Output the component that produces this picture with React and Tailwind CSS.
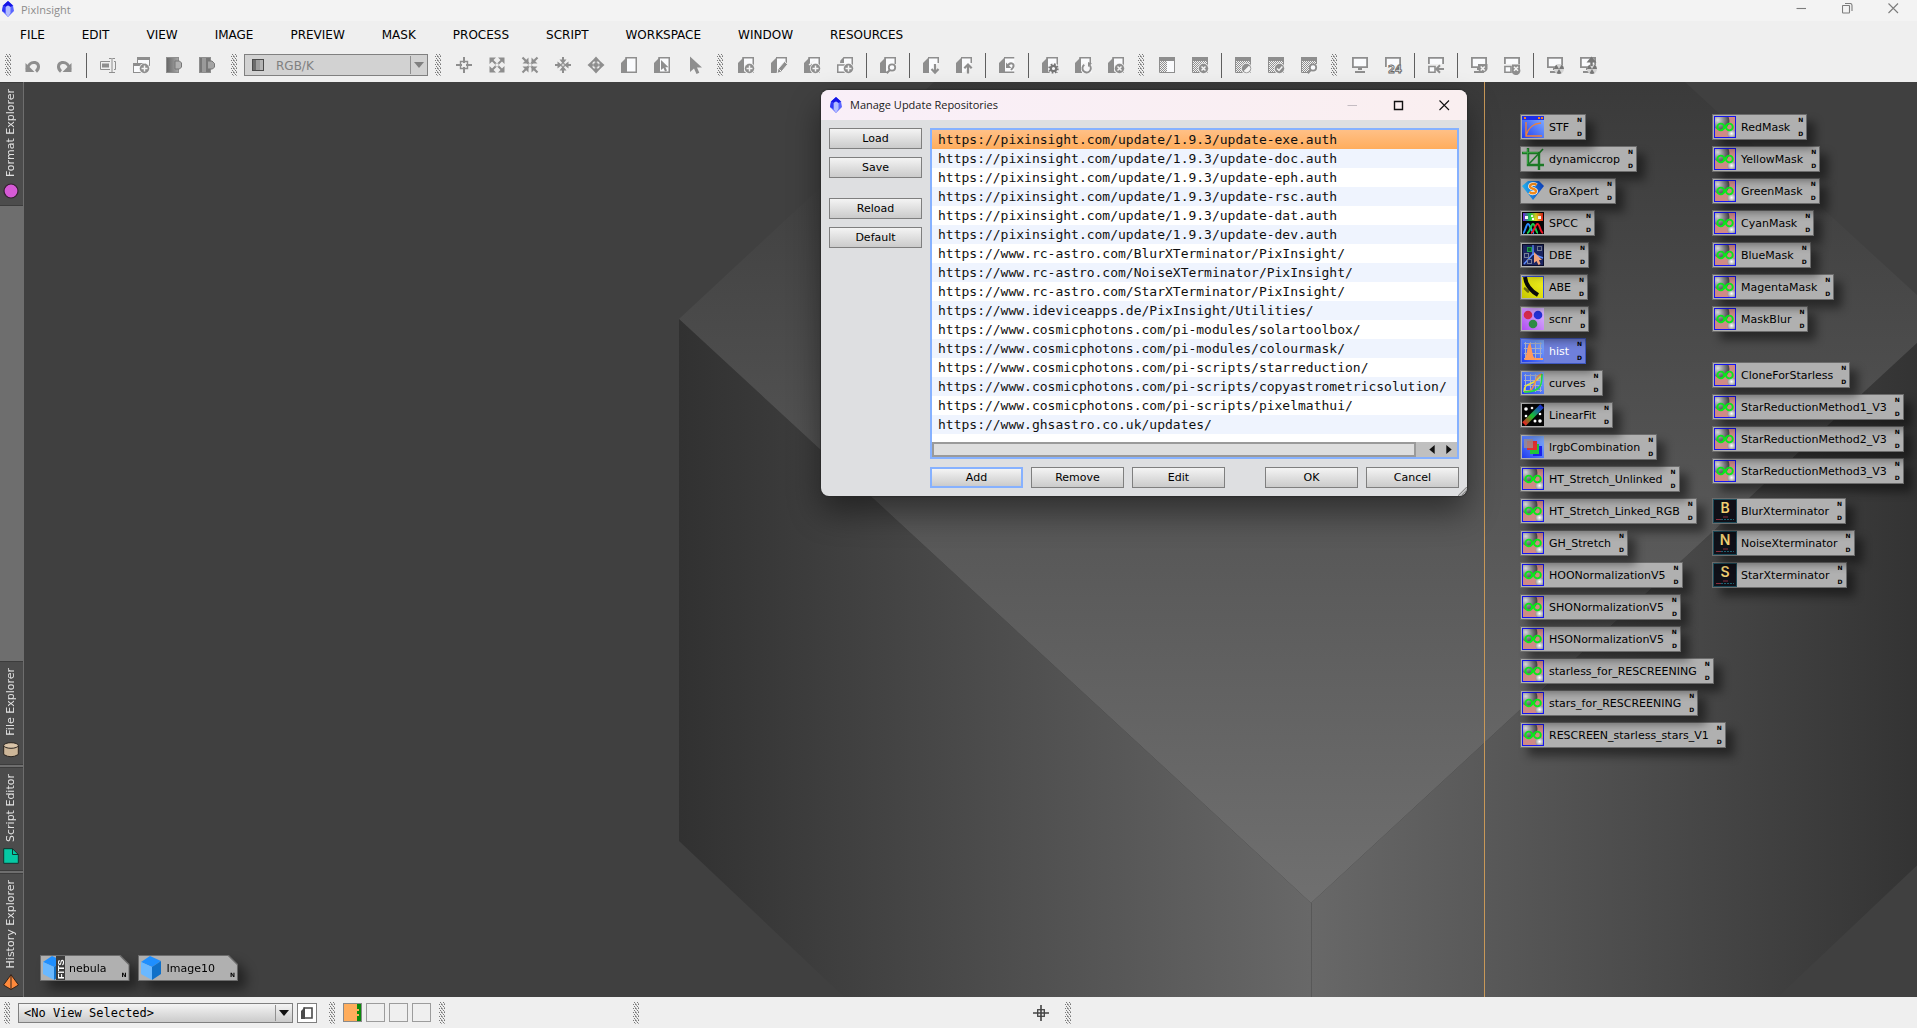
import React from "react";

/* ---------- toolbar glyphs, all on a 20x20 grid ---------- */
const G = "#8e8e8e";

const Doc = ({ flat }) =>
  flat ? (
    <g>
      <path d="M6 8 V6 L9 2.75 H17.25 V11" fill="#fafbfd" stroke={G} strokeWidth="1.5" />
      <path d="M5 8 L9 2 V8Z" fill={G} />
      <path d="M2.75 17.25 V10 H13 V17.25Z" fill="#fafbfd" stroke={G} strokeWidth="1.5" />
    </g>
  ) : (
    <g>
      <path d="M7 2.75 H17.25 V17.25 H7Z" fill="#fafbfd" stroke={G} strokeWidth="1.5" />
      <path d="M2 8 L8 2 V18 H2Z" fill={G} />
    </g>
  );
const OpenDoc = ({ cut }) => (
  <g>
    <path d={cut ? "M8 2.75 H17.25 V8 L11 17 H8Z" : "M8 2.75 H17.25 V7 L9 17 H8Z"} fill="#fafbfd" />
    <path d="M7 2.75 H17.25 V8" fill="none" stroke={G} strokeWidth="1.5" />
    <path d="M2 8 L8 2 V18 H2Z" fill={G} />
  </g>
);
const Win = ({ half }) => (
  <g>
    <rect x="2" y="2" width="16" height="16" fill="url(#dither)" />
    {half && <rect x="10" y="6" width="7" height="11" fill="#fafbfd" />}
    <path d="M2.5 2.5 H17.5 V17.5 H2.5Z" fill="none" stroke={G} />
    <rect x="2" y="2" width="16" height="4" fill={G} />
  </g>
);
const Badge = ({ children }) => (
  <g>
    <circle cx="13.5" cy="13.5" r="5.5" fill="#efefef" />
    <circle cx="13.5" cy="13.5" r="4.7" fill={G} />
    <g stroke="#f4f4f4" strokeWidth="1.5" fill="none">{children}</g>
  </g>
);
const PlusBadge = () => <Badge><path d="M13.5 10.5 V16.5 M10.5 13.5 H16.5" /></Badge>;
const XBadge = () => <Badge><path d="M11.5 11.5 L15.5 15.5 M15.5 11.5 L11.5 15.5" /></Badge>;
const Lens = () => (
  <g>
    <path d="M9 19 L13 9 L18.5 9 V18Z" fill="#f2f2f2" />
    <circle cx="14" cy="12.5" r="3.2" fill="#fafbfd" stroke={G} strokeWidth="1.8" />
    <path d="M11.8 15 L8.8 18.2" stroke={G} strokeWidth="2" />
  </g>
);
const Monitor = () => (
  <g>
    <path d="M2.9 2.9 H17.1 V12.1 H2.9Z" fill="#fafbfd" stroke={G} strokeWidth="1.8" />
    <path d="M8 13 H12 V15 H8Z M5 16 H15 V18 H5Z" fill={G} />
  </g>
);
const Atom = () => (
  <g>
    <circle cx="14" cy="14" r="5" fill="#d4d4d4" />
    <path d="M14 14 L11.5 9.7 A5 5 0 0 0 9 14Z M14 14 L16.5 9.7 A5 5 0 0 1 19 14Z M14 14 L11.5 18.3 A5 5 0 0 0 16.5 18.3Z" fill="#777" />
  </g>
);

const glyphs = {
  undo: <g><path d="M5 14.5 C6 10 9 6.8 13 7.5 C17.5 8.5 17.5 13.5 14 16.5" fill="none" stroke={G} strokeWidth="3" /><path d="M3.5 8 V17 H12.5Z" fill={G} /></g>,
  redo: <g transform="translate(20 0) scale(-1 1)"><path d="M5 14.5 C6 10 9 6.8 13 7.5 C17.5 8.5 17.5 13.5 14 16.5" fill="none" stroke={G} strokeWidth="3" /><path d="M3.5 8 V17 H12.5Z" fill={G} /></g>,
  rename: <g fill="none" stroke={G}><path d="M12 6.5 H2.5 V14.5 H12 M16 6.5 H17.5 V14.5 H16" /><path d="M11 3.5 H13.5 L14 4 L14.5 3.5 H17 M14 4 V17 M11 17.5 H17" /><rect x="4.5" y="9" width="6" height="3" fill={G} /></g>,
  newwin: <g><rect x="6.5" y="2.5" width="12" height="8" fill="#fafbfd" stroke={G} /><rect x="6" y="2" width="13" height="3" fill={G} /><rect x="2.5" y="8.5" width="12" height="9" fill="#fafbfd" stroke={G} /><rect x="2" y="8" width="13" height="3" fill={G} /><PlusBadge /></g>,
  dupA: <g><rect x="2.5" y="2.5" width="12" height="15" fill="url(#darkdoc)" stroke={G} /><path d="M11 6 H15.5 L17.5 8 V12 L15.5 14 H11Z" fill="#b0b0b0" stroke="#777" /></g>,
  dupB: <g><rect x="2.5" y="2.5" width="11" height="15" fill="#777" stroke={G} /><rect x="5" y="3" width="4" height="14" fill="#9a9a9a" /><path d="M10.5 6 H15 L17.5 8.5 V12 L15.5 14 H10.5Z" fill="#a4a4a4" stroke="#777" /></g>,
  cross: <g fill="none" stroke={G} strokeWidth="2"><path d="M10 2 V8 M10 12 V18 M2 10 H8 M12 10 H18" /><path d="M6.5 6.5 H13.5 V13.5 H6.5Z" strokeWidth="1.4" /></g>,
  fitout: <g fill={G}><path d="M2.5 2.5 H9 L2.5 9Z M17.5 2.5 V9 L11 2.5Z M2.5 17.5 V11 L9 17.5Z M17.5 17.5 H11 L17.5 11Z" /><path d="M4 4 L16 16 M16 4 L4 16" stroke={G} strokeWidth="2" /><rect x="8.5" y="8.5" width="3" height="3" fill="#efefef" /></g>,
  fitin: <g fill={G}><path d="M8.5 8.5 H2.5 L8.5 2.5Z M11.5 8.5 V2.5 L17.5 8.5Z M8.5 11.5 V17.5 L2.5 11.5Z M11.5 11.5 H17.5 L11.5 17.5Z" /><path d="M2.5 2.5 L17.5 17.5 M17.5 2.5 L2.5 17.5" stroke={G} strokeWidth="2.2" /><rect x="8.5" y="8.5" width="3" height="3" fill="#efefef" /></g>,
  zoomin: <g fill={G}><path d="M10 9 L6.5 4.5 H9 V2 H11 V4.5 H13.5Z M10 11 L6.5 15.5 H9 V18 H11 V15.5 H13.5Z M9 10 L4.5 6.5 V9 H2 V11 H4.5 V13.5Z M11 10 L15.5 6.5 V9 H18 V11 H15.5 V13.5Z" /><rect x="8.7" y="8.7" width="2.6" height="2.6" fill="#efefef" stroke={G} /></g>,
  zoomout: <g fill={G}><path d="M10 1.5 L14.5 6.5 H5.5Z M10 18.5 L14.5 13.5 H5.5Z M1.5 10 L6.5 5.5 V14.5Z M18.5 10 L13.5 5.5 V14.5Z" /><path d="M6 6 L14 14 M14 6 L6 14 M10 5 V15 M5 10 H15" stroke={G} strokeWidth="1.6" /><path d="M7 7 h1.6 v1.6 h-1.6z M11.4 7 h1.6 v1.6 h-1.6z M7 11.4 h1.6 v1.6 h-1.6z M11.4 11.4 h1.6 v1.6 h-1.6z" fill="#efefef" /></g>,
  doc: <Doc />,
  docarrow: <g><Doc /><path d="M9 5 V15 L11.5 13 L13 16.5 L15 15.5 L13.4 12.2 H16.5Z" fill={G} /></g>,
  pointer: <path d="M5 1.5 V17 L9 13.5 L11.5 19 L14.3 17.8 L12 12.5 H17Z" fill={G} />,
  docplus: <g><Doc /><PlusBadge /></g>,
  docpen: <g><OpenDoc /><path d="M8 18.5 L9 14 L15.5 6.5 L18.7 9.3 L12.3 17Z" fill={G} stroke="#f4f4f4" /><path d="M10.5 14.5 L12 16" stroke="#f4f4f4" /></g>,
  docadd2: <g><Doc /><path d="M2 18 L10 8 V18Z" fill={G} /><path d="M7 10 L13 5" stroke="#f4f4f4" strokeWidth="1.4" /><PlusBadge /></g>,
  docadd3: <g><Doc flat /><PlusBadge /></g>,
  doclens: <g><Doc /><Lens /></g>,
  docdown: <g><OpenDoc cut /><path d="M14 9 V18 M10.5 14 L14 17.7 L17.5 14" fill="none" stroke={G} strokeWidth="2.2" /></g>,
  docup: <g><OpenDoc cut /><path d="M14 18.5 V10 M10.3 13.3 L14 9.5 L17.7 13.3" fill="none" stroke={G} strokeWidth="2.2" /></g>,
  docundo: <g><path d="M8 2.75 H17.25 V17.25 H8Z" fill="#fafbfd" /><path d="M7 2.75 H17.25 M7 17.25 H17.25" stroke={G} strokeWidth="1.5" /><path d="M2 8 L8 2 V18 H2Z" fill={G} /><path d="M10.5 11.5 C12.5 6.5 18.5 8 16 12.5 L14 15" fill="none" stroke={G} strokeWidth="2" /><path d="M9 7.5 V13 H14.5Z" fill={G} /></g>,
  docgear: <g><Doc /><circle cx="13.5" cy="13.5" r="5.5" fill="#f4f4f6" /><circle cx="13.5" cy="13.5" r="4.2" fill="none" stroke="#777" strokeWidth="2" strokeDasharray="1.65 1.65" /><circle cx="13.5" cy="13.5" r="2.7" fill="none" stroke="#777" strokeWidth="2.2" /></g>,
  docloop: <g><Doc /><rect x="9" y="8" width="10" height="10" fill="#f6f6f8" /><path d="M11.3 9.8 A4.2 4.2 0 1 0 16.5 10.2" fill="none" stroke={G} strokeWidth="1.9" /><path d="M15 7 V12 L19 8.5Z" fill={G} /></g>,
  docx: <g><Doc /><XBadge /></g>,
  win: <Win half />,
  winx: <g><Win /><XBadge /></g>,
  winhalf: <g><Win /><Badge><path d="M11 16 L16 11 A3.5 3.5 0 0 1 11 16Z" fill="#f4f4f4" strokeWidth="0.6" /></Badge></g>,
  wincheck: <g><Win /><Badge><path d="M11 13.5 L13 15.5 L16.3 11.5" /></Badge></g>,
  winlens: <g><Win /><Lens /></g>,
  mon: <Monitor />,
  mon24: <g><path d="M2.9 12 V2.9 H17.1 V10" fill="#fafbfd" stroke={G} strokeWidth="1.8" /><text x="5" y="18" fontFamily="DejaVu Sans" fontWeight="bold" fontSize="10" fill="#efefef" stroke="#6a6a6a" strokeWidth="0.9">24</text></g>,
  monleft: <g><path d="M2.9 9 V2.9 H17.1 V9" fill="#fafbfd" stroke={G} strokeWidth="1.8" /><path d="M2.9 11.5 H9 V17.2 H2.9Z" fill="#fafbfd" stroke={G} strokeWidth="1.6" /><path d="M18 14 H10.5 M14 10.3 L10.3 14 L14 17.7" fill="none" stroke={G} strokeWidth="2" /></g>,
  monx: <g><Monitor /><path d="M9 9 H18.5 V14 A5 5 0 0 1 9 14Z" fill={G} /><path d="M11.7 11.5 L15.7 15.5 M15.7 11.5 L11.7 15.5" stroke="#f4f4f4" strokeWidth="1.6" /></g>,
  monboxx: <g><path d="M2.9 9 V2.9 H17.1 V9" fill="#fafbfd" stroke={G} strokeWidth="1.8" /><path d="M2.9 11.5 H9 V17.2 H2.9Z" fill="#fafbfd" stroke={G} strokeWidth="1.6" /><path d="M10 9.5 H18 V14 A4 4 0 0 1 10 17.5Z" fill={G} /><path d="M12 11.7 L16 15.7 M16 11.7 L12 15.7" stroke="#f4f4f4" strokeWidth="1.5" /></g>,
  monatom: <g><Monitor /><Atom /></g>,
  monatomup: <g><Monitor /><Atom /><path d="M13.5 11 V5" stroke="#777" strokeWidth="2.4" /><path d="M8.5 7.5 L13.5 1.5 L18.5 7.5Z" fill="#777" /></g>,
};

const Glyph = ({ name }) => (
  <svg viewBox="0 0 20 20" className="size-5" aria-hidden="true">{glyphs[name]}</svg>
);

const Handle = ({ wide = "w-[18px]" }) => (
  <div className={"flex h-[22px] shrink-0 justify-center " + wide}>
    <svg className="h-[22px] w-[6px]" aria-hidden="true"><rect width="6" height="22" fill="url(#grip)" /></svg>
  </div>
);
const Sep = () => (
  <div className="flex h-[25px] w-[10px] shrink-0 justify-center"><div className="w-px bg-[#5f5f5f]" /></div>
);

const toolbarRest = [
  "cross", "fitout", "fitin", "zoomin", "zoomout", "doc", "docarrow", "pointer", "#",
  "docplus", "docpen", "docadd2", "docadd3", "|", "doclens", "|", "docdown", "docup", "|", "docundo", "|",
  "docgear", "docloop", "docx", "#", "win", "winx", "|", "winhalf", "wincheck", "winlens", "#",
  "mon", "mon24", "|", "monleft", "|", "monx", "monboxx", "|", "monatom", "monatomup",
];
const ToolItem = ({ name }) => {
  if (name === "|") return <Sep />;
  if (name === "#") return <Handle />;
  return (
    <button aria-label={name} className="flex h-8 w-[33px] shrink-0 items-center justify-center">
      <Glyph name={name} />
    </button>
  );
};

const Logo = ({ className }) => (
  <svg viewBox="0 0 12 16" className={className} aria-hidden="true">
    <path d="M6 0 L11 4.5 L12 10 L6 16 L0 10 L1 4.5Z" fill="#5a66ff" />
    <path d="M6 0 L11 4.5 L8.5 6 L6 4.5 L3.5 6 L1 4.5Z" fill="#1414e6" />
    <path d="M3.5 6 L6 4.5 L8.5 6 L8.5 12 L6 16 L3.5 12Z" fill="#b3bdff" />
    <path d="M1 4.5 L3.5 6 V12 L0 10Z" fill="#3038f5" />
  </svg>
);

/* ---------- workspace icons on a 22x22 grid ---------- */
const art = {
  script: (
    <g>
      <rect width="22" height="22" fill="#cf8a86" />
      <circle cx="6.500" cy="5" r="9" fill="url(#ball)" />
      <circle cx="18" cy="18" r="4.500" fill="url(#smallball)" />
      <circle cx="6.800" cy="11" r="3.400" fill="none" stroke="#0be81c" strokeWidth="1.900" />
      <circle cx="15.400" cy="11" r="3.400" fill="none" stroke="#0be81c" strokeWidth="1.900" />
      <path d="M9 13 L13 9" stroke="#0be81c" strokeWidth="1.900" />
      <rect x="0.5" y="0.5" width="21" height="21" fill="none" stroke="#1414f0" />
    </g>
  ),
  stf: <g><rect width="22" height="22" fill="url(#blue)" /><rect width="22" height="4" fill="#1d2ee8" /><path d="M2 1 h2 v2 h-2z M16 1 h2 v2 h-2z M19 1 h2 v2 h-2z" fill="#f58025" /><path d="M4 6 V20 H20 M4 20 C6 12 10 8 19 7" fill="none" stroke="#f08038" strokeWidth="1.4" /></g>,
  crop: <g fill="none" strokeWidth="2.4" stroke="#1c7a26"><path d="M0 5 H17 V22 M6 0 V17 H22" /><path d="M6 17 L21 1" strokeWidth="1.6" /><path d="M1 4.5 H16 M5.500 1 V16" stroke="#3fae48" strokeWidth="0.8" /></g>,
  graxpert: <g><path d="M0 6 L6 1 H17 L22 6 L11 20Z" fill="url(#gem)" /><path d="M14.500 5 C12 3 8 4 8 6.500 C8 9 14 8.500 14 11 C14 13.500 10 14 7.500 12" fill="none" stroke="#fff" strokeWidth="3.800" /><path d="M14.500 5 C12 3 8 4 8 6.500 C8 9 14 8.500 14 11 C14 13.500 10 14 7.500 12" fill="none" stroke="#f08a1c" strokeWidth="2.400" /></g>,
  spcc: <g><rect width="22" height="22" fill="#050505" /><rect x="1" y="1" width="20" height="8" fill="url(#rainbow)" /><path d="M3 4 h3 v3 h-3z M9 3 h2 v2 h-2z M10 6 h2 v2 h-2z M16 4 h3 v3 h-3z" fill="#fff" /><path d="M1 21 C3 21 4 12 6 12 C8 12 10 21 12 21" fill="none" stroke="#2c8cff" strokeWidth="2" /><path d="M5 21 C8 21 9 12 11 12 C13 12 14 21 16 21" fill="none" stroke="#18d050" strokeWidth="2" /><path d="M9 21 C12 21 13 12 15.500 12 C18 12 18 20 21 21" fill="none" stroke="#f01828" strokeWidth="2" /></g>,
  dbe: <g><rect width="22" height="22" fill="#0b0d2a" /><rect x="1" y="1" width="20" height="20" fill="#1c2560" /><path d="M11 1 V10 L2 20 M11 10 L21 14" stroke="#5d8dff" strokeWidth="1.5" fill="none" /><g fill="none" stroke="#777f98"><rect x="15.500" y="2.500" width="4" height="4" /><rect x="2.500" y="9.500" width="4" height="4" /><rect x="5.500" y="15.500" width="4" height="4" /></g><rect x="5.500" y="3.500" width="4" height="4" fill="#0f6030" stroke="#1fa050" /><path d="M12 8 V19 L14.500 17 L16.500 21 L18.500 20 L17 16 H20Z" fill="#f2a47c" /></g>,
  abe: <g><rect width="22" height="22" fill="#3450d8" /><rect y="1" width="21" height="21" fill="url(#yel)" /><path d="M3 1 C4 10 9 15 16 19" stroke="#0a0a0a" strokeWidth="4" fill="none" /><path d="M2 12 C4 13 5 15 7 16" stroke="#6b6b10" strokeWidth="2.5" fill="none" /></g>,
  scnr: <g><rect width="22" height="22" fill="url(#pur)" /><circle cx="6" cy="7" r="4.300" fill="#d62b4c" /><circle cx="16" cy="7" r="4.300" fill="#2432d8" /><circle cx="11" cy="16" r="4.300" fill="#2f8a45" /></g>,
  hist: <g><rect width="22" height="22" fill="url(#blue)" /><path d="M2 3.500 H20 M2 8.500 H20 M2 13.500 H20 M2 18.500 H20 M3.500 2 V20 M8.500 2 V20 M13.500 2 V20 M18.500 2 V20" stroke="#a9b0c8" fill="none" /><path d="M2 20 C5 18 5 4 8 3 C10 6 10 17 13 18 H21 V20Z" fill="#ff9a5c" /></g>,
  curves: <g><rect width="22" height="22" fill="url(#blue)" /><path d="M2 3.500 H20 M2 8.500 H20 M2 13.500 H20 M2 18.500 H20 M3.500 2 V20 M8.500 2 V20 M13.500 2 V20 M18.500 2 V20" stroke="#a9b0c8" fill="none" /><path d="M2 20 C2 8 12 16 20 2" stroke="#e8e83a" strokeWidth="1.500" fill="none" /><path d="M2 20 C16 20 10 4 20 2" stroke="#f0904a" strokeWidth="1.500" fill="none" /><path d="M2 20 C20 20 20 12 20 2" stroke="#20e040" strokeWidth="1.500" fill="none" /></g>,
  linear: <g><rect width="22" height="22" fill="#050505" /><g fill="#fff"><circle cx="4" cy="5" r="1.800" /><circle cx="10" cy="4" r="1.300" /><circle cx="4" cy="12" r="1.300" /><circle cx="18" cy="10" r="1.300" /><circle cx="13" cy="17" r="1.500" /><circle cx="18" cy="17" r="1.800" /></g><path d="M2 20 L20 2" stroke="url(#rainbow2)" strokeWidth="5" /></g>,
  lrgb: <g><rect width="22" height="22" fill="url(#blue)" /><rect x="11" y="10" width="9" height="10" fill="#1b22e8" /><rect x="8" y="8" width="9" height="10" fill="#21c43a" /><rect x="5" y="5" width="10" height="9" fill="#e03030" /><rect x="2" y="3" width="9" height="9" fill="#a08e8e" opacity="0.8" /></g>,
};

const Xterm = ({ letter }) => (
  <span className="flex h-6 w-6 flex-col items-center border border-[#1c4a58] bg-[#0f1018] font-['Inter'] text-sm leading-4 font-semibold text-[#f0cf72]">
    {letter}
    <svg viewBox="0 0 20 5" className="h-[5px] w-5" aria-hidden="true"><path d="M8 1 H13" stroke="#8a2c3c" /><path d="M1 3.500 H6" stroke="#8a2c3c" /><path d="M6 3.500 H19" stroke="#1e6070" strokeDasharray="2 1" /></svg>
  </span>
);

const ProcessIcon = ({ label, icon = "script", selected, z }) => (
  <button
    style={{ zIndex: z }}
    className={
      "relative flex h-[26px] items-center border pr-4 text-[11px] shadow-[8px_8px_10px_rgba(0,0,0,0.45)] " +
      (selected ? "border-[#4058c0] bg-[#6f80dc] text-white" : "border-[#6c6c6c] bg-[#b0b0b0] text-black")
    }
  >
    {icon.length === 1 ? (
      <Xterm letter={icon} />
    ) : (
      <svg viewBox="0 0 22 22" className="mx-px size-[22px]" aria-hidden="true">{art[icon]}</svg>
    )}
    <span className="ml-1 pt-0.5 whitespace-nowrap">{label}</span>
    <span className="absolute top-[2px] right-[3px] flex h-5 flex-col justify-between text-[6px] leading-[6px] font-bold text-black">
      <span>N</span>
      <span>D</span>
    </span>
  </button>
);

const columnA = [
  ["STF", "stf"], ["dynamiccrop", "crop"], ["GraXpert", "graxpert"], ["SPCC", "spcc"], ["DBE", "dbe"], ["ABE", "abe"],
  ["scnr", "scnr"], ["hist", "hist"], ["curves", "curves"], ["LinearFit", "linear"], ["lrgbCombination", "lrgb"],
  ["HT_Stretch_Unlinked"], ["HT_Stretch_Linked_RGB"], ["GH_Stretch"], ["HOONormalizationV5"], ["SHONormalizationV5"],
  ["HSONormalizationV5"], ["starless_for_RESCREENING"], ["stars_for_RESCREENING"], ["RESCREEN_starless_stars_V1"],
];
const columnB = [
  [["RedMask"], ["YellowMask"], ["GreenMask"], ["CyanMask"], ["BlueMask"], ["MagentaMask"], ["MaskBlur"]],
  [["CloneForStarless"], ["StarReductionMethod1_V3"], ["StarReductionMethod2_V3"], ["StarReductionMethod3_V3"]],
  [["BlurXterminator", "B"], ["NoiseXterminator", "N"], ["StarXterminator", "S"]],
];
const Stack = ({ items }) => (
  <div className="flex flex-col items-start gap-1.5">
    {items.map(([label, icon], i) => (
      <ProcessIcon key={label} label={label} icon={icon} selected={label === "hist"} z={items.length - i} />
    ))}
  </div>
);

const ImageIcon = ({ label, fits }) => (
  <div className="drop-shadow-[8px_8px_6px_rgba(0,0,0,0.45)]">
    <button className="relative flex h-[26px] items-center bg-[#6c6c6c] p-px text-[11px] text-black [clip-path:polygon(0_0,calc(100%_-_9px)_0,100%_9px,100%_100%,0_100%)]">
      <span className="flex h-6 items-center bg-[#b0b0b0] pr-[22px] [clip-path:polygon(0_0,calc(100%_-_9px)_0,100%_9px,100%_100%,0_100%)]">
        <svg viewBox="0 0 24 24" className="size-6" aria-hidden="true">
          <path d="M2 6 L11 0 L22 5 L13 11Z" fill="#1f8fff" />
          <path d="M2 6 L13 11 V24 L2 18Z" fill="#6ab8ff" />
          <path d="M22 5 V18 L13 24 V11Z" fill="#1070c8" />
          {fits && <rect x="15" width="9" height="24" fill="#3c3c3c" />}
          {fits && <text transform="translate(23 23) rotate(-90)" fontFamily="Liberation Sans" fontWeight="bold" fontSize="9" fill="#fff">FITS</text>}
        </svg>
        <span className="ml-1 pt-0.5">{label}</span>
      </span>
      <span className="absolute right-[3px] bottom-[3px] text-[6px] leading-[6px] font-bold">N</span>
    </button>
  </div>
);

/* ---------- sidebar ---------- */
const SideTab = ({ label, children }) => (
  <button className="mr-px flex w-[23px] flex-col items-center gap-[6px] border-y border-[#3c3c3c] bg-[#4c4c4c] pt-[6px] pr-[2px] pb-[6px] text-[11px] leading-4 text-[#e2e2e2]">
    <span className="rotate-180 whitespace-nowrap [writing-mode:vertical-rl]">{label}</span>
    <svg viewBox="0 0 16 16" className="size-4" aria-hidden="true">{children}</svg>
  </button>
);

/* ---------- dialog ---------- */
const urls = [
  "https://pixinsight.com/update/1.9.3/update-exe.auth",
  "https://pixinsight.com/update/1.9.3/update-doc.auth",
  "https://pixinsight.com/update/1.9.3/update-eph.auth",
  "https://pixinsight.com/update/1.9.3/update-rsc.auth",
  "https://pixinsight.com/update/1.9.3/update-dat.auth",
  "https://pixinsight.com/update/1.9.3/update-dev.auth",
  "https://www.rc-astro.com/BlurXTerminator/PixInsight/",
  "https://www.rc-astro.com/NoiseXTerminator/PixInsight/",
  "https://www.rc-astro.com/StarXTerminator/PixInsight/",
  "https://www.ideviceapps.de/PixInsight/Utilities/",
  "https://www.cosmicphotons.com/pi-modules/solartoolbox/",
  "https://www.cosmicphotons.com/pi-modules/colourmask/",
  "https://www.cosmicphotons.com/pi-scripts/starreduction/",
  "https://www.cosmicphotons.com/pi-scripts/copyastrometricsolution/",
  "https://www.cosmicphotons.com/pi-scripts/pixelmathui/",
  "https://www.ghsastro.co.uk/updates/",
];
const Btn = ({ children, focus }) => (
  <button
    className={
      "flex h-[21px] w-[93px] items-center justify-center bg-linear-to-b from-[#f4f4f4] to-[#cbcbcb] pt-0.5 text-[11px] text-black " +
      (focus ? "border-2 border-[#86b1ff]" : "border border-[#7f7f7f]")
    }
  >
    {children}
  </button>
);

const Dialog = () => (
  <section
    role="dialog"
    aria-label="Manage Update Repositories"
    className="absolute top-[8px] left-[797px] z-40 flex w-[646px] flex-col overflow-hidden rounded-lg bg-[#dedfe1] shadow-[0_0_1px_1px_rgba(40,40,40,0.6),0_16px_32px_rgba(0,0,0,0.45)]"
  >
    <header className="flex h-[30px] items-center bg-linear-to-r from-[#f9eff8] to-[#faeff0] pl-[9px]">
      <Logo className="h-4 w-3" />
      <h2 className="ml-2 flex-1 font-['Open_Sans'] text-[11px] text-[#1a1a1a]">Manage Update Repositories</h2>
      <WinButton kind="min" color="#c4bcc2" />
      <WinButton kind="max" color="#111" />
      <WinButton kind="close" color="#111" />
    </header>
    <div className="flex gap-2 px-2 pt-2 pb-[8px]">
      <div className="flex flex-col gap-2">
        <Btn>Load</Btn>
        <Btn>Save</Btn>
        <div className="h-1" />
        <Btn>Reload</Btn>
        <Btn>Default</Btn>
      </div>
      <div className="flex min-w-0 flex-1 flex-col gap-2">
        <div className="border-2 border-[#86b1ff] bg-white">
          <ul className="overflow-hidden pb-2 font-['DejaVu_Sans_Mono'] text-[13px] leading-[19px] text-[#101010]">
            {urls.map((u, i) => (
              <li
                key={u}
                className={
                  "h-[19px] pl-[6px] whitespace-nowrap " +
                  (i === 0 ? "bg-linear-to-b from-[#ffc086] to-[#ffad5c]" : i % 2 ? "bg-[#eff4fe]" : "bg-white")
                }
              >
                {u}
              </li>
            ))}
          </ul>
          <div className="flex h-[15px] items-stretch bg-[#c0c0c0]">
            <div className="flex-1 border-2 border-[#9a9a9a] bg-[#dedede]" />
            <div className="flex w-[41px] items-center justify-end gap-[11px] pr-[5px]">
              <svg viewBox="0 0 6 10" className="h-[9px] w-[6px]"><path d="M6 0 V10 L0 5Z" fill="#111" /></svg>
              <svg viewBox="0 0 6 10" className="h-[9px] w-[6px]"><path d="M0 0 V10 L6 5Z" fill="#111" /></svg>
            </div>
          </div>
        </div>
        <div className="flex gap-2">
          <Btn focus>Add</Btn>
          <Btn>Remove</Btn>
          <Btn>Edit</Btn>
          <div className="flex-1" />
          <Btn>OK</Btn>
          <Btn>Cancel</Btn>
        </div>
      </div>
    </div>
    <svg viewBox="0 0 9 9" className="absolute right-0 bottom-0 size-[9px]" aria-hidden="true">
      <path d="M0 9 L9 0 M3 9 L9 3 M6 9 L9 6" stroke="#8a8a8a" strokeWidth="1.2" />
    </svg>
  </section>
);

function WinButton({ kind, color }) {
  const d = {
    min: "M0.5 5.500 H10",
    max: "M1.500 1.500 H9.500 V9.500 H1.500Z",
    restore: "M0.500 3 Q0.500 2.500 1 2.500 H7 Q7.500 2.500 7.500 3 V9 Q7.500 10 7 10 H1 Q0.500 10 0.500 9Z M3 0.500 H8 Q10 0.500 10 2.500 V8",
    close: "M0.500 0.500 L10 10 M10 0.500 L0.500 10",
  }[kind];
  return (
    <button aria-label={kind} className="flex h-full w-[46px] items-center justify-center">
      <svg viewBox="0 0 11 11" className="size-[11px]" fill="none" stroke={color} strokeWidth={kind === "max" ? 1.4 : 1.1}><path d={d} /></svg>
    </button>
  );
}

const Defs = () => (
  <svg className="absolute h-0 w-0" aria-hidden="true">
    <defs>
      <pattern id="grip" width="6" height="4" patternUnits="userSpaceOnUse">
        <path d="M1 0 h1 v1 h-1z M4 0 h1 v1 h-1z M2 2 h1 v1 h-1z M0 2 h1 v1 h-1z M5 2 h1 v1 h-1z" fill="#777" />
        <path d="M2 1 h1 v1 h-1z M5 1 h1 v1 h-1z M3 3 h1 v1 h-1z M3 2 h1 v1 h-1z" fill="#a8a8a8" />
      </pattern>
      <pattern id="dither" width="2" height="2" patternUnits="userSpaceOnUse">
        <rect width="2" height="2" fill="#f2f2f2" />
        <path d="M0 0 h1 v1 h-1z M1 1 h1 v1 h-1z" fill="#909090" />
      </pattern>
      <linearGradient id="darkdoc"><stop stopColor="#666" /><stop offset="1" stopColor="#a8a8a8" /></linearGradient>
      <radialGradient id="ball" cx="0.35" cy="0.45" r="0.6"><stop stopColor="#dcdce0" /><stop offset="1" stopColor="#4c4c50" /></radialGradient>
      <radialGradient id="smallball" cx="0.45" cy="0.45" r="0.6"><stop stopColor="#fff" /><stop offset="1" stopColor="#77777a" /></radialGradient>
      <linearGradient id="blue" x1="0" y1="1" x2="1" y2="0"><stop stopColor="#1f3cf0" /><stop offset="1" stopColor="#86b4ff" /></linearGradient>
      <linearGradient id="gem" x1="0" x2="1"><stop stopColor="#25b4f0" /><stop offset="1" stopColor="#0c3fc0" /></linearGradient>
      <linearGradient id="yel" x1="0" x2="1" y1="1"><stop stopColor="#c8c800" /><stop offset="1" stopColor="#f4f420" /></linearGradient>
      <linearGradient id="pur" x1="0" y1="1" x2="1" y2="0"><stop stopColor="#b04cf0" /><stop offset="1" stopColor="#dcc0ff" /></linearGradient>
      <linearGradient id="rainbow"><stop stopColor="#7020e0" /><stop offset="0.35" stopColor="#18d050" /><stop offset="0.65" stopColor="#f0e020" /><stop offset="1" stopColor="#f02020" /></linearGradient>
      <linearGradient id="rainbow2" gradientUnits="userSpaceOnUse" x1="2" y1="20" x2="20" y2="2"><stop stopColor="#f02020" /><stop offset="0.45" stopColor="#18c030" /><stop offset="1" stopColor="#2030f0" /></linearGradient>
      <linearGradient id="topface" gradientUnits="userSpaceOnUse" x1="0" y1="0" x2="0" y2="822"><stop stopColor="#3a3a3a" /><stop offset="1" stopColor="#707070" /></linearGradient>
      <linearGradient id="leftface" gradientUnits="userSpaceOnUse" x1="655" y1="0" x2="1287" y2="0"><stop stopColor="#313131" /><stop offset="1" stopColor="#686868" /></linearGradient>
      <linearGradient id="rightface" gradientUnits="userSpaceOnUse" x1="1287" y1="0" x2="1919" y2="0"><stop stopColor="#686868" /><stop offset="1" stopColor="#313131" /></linearGradient>
    </defs>
  </svg>
);

const menus = ["FILE", "EDIT", "VIEW", "IMAGE", "PREVIEW", "MASK", "PROCESS", "SCRIPT", "WORKSPACE", "WINDOW", "RESOURCES"];

export default function App() {
  return (
    <div className="flex h-screen flex-col overflow-hidden bg-[#404040] font-['DejaVu_Sans',sans-serif]">
      <Defs />
      <header className="flex h-[21px] shrink-0 items-start bg-[#f3f3f3] pr-px pl-[2px]">
        <Logo className="mt-px h-4 w-3" />
        <h1 className="ml-[7px] flex-1 font-['Open_Sans'] text-[11px] leading-5 text-[#8c8c8c]">PixInsight</h1>
        <div className="flex h-[17px]">
          <WinButton kind="min" color="#7c7c7c" />
          <WinButton kind="restore" color="#7c7c7c" />
          <WinButton kind="close" color="#7c7c7c" />
        </div>
      </header>
      <nav className="flex h-[27px] shrink-0 items-center gap-[37px] bg-[#efefef] pl-5 text-xs text-black">
        {menus.map((m) => <button key={m}>{m}</button>)}
      </nav>
      <div className="flex h-[34px] shrink-0 items-center bg-[#efefef]">
        <Handle wide="w-[15px]" />
        {["undo", "redo", "|", "rename", "newwin", "dupA", "dupB"].map((n, i) => <ToolItem key={i} name={n} />)}
        <Handle wide="w-[21px]" />
        <div className="relative flex h-[22px] w-[184px] shrink-0 items-center border border-[#808080] bg-[#d2d2d2]">
          <svg viewBox="0 0 12 12" className="absolute left-[7px] size-3" aria-hidden="true">
            <rect x="0.5" y="0.5" width="11" height="11" fill="#9c9c9c" stroke="#4a4a4a" /><rect x="1" y="1" width="3" height="10" fill="#6a6a6a" /><rect x="8" y="1" width="3" height="10" fill="#b4b4b4" />
          </svg>
          <select aria-label="Channel" disabled className="h-full w-full appearance-none bg-transparent pt-0.5 pl-[31px] text-xs text-[#808080] opacity-100">
            <option>RGB/K</option>
          </select>
          <div className="pointer-events-none absolute right-0 flex h-[18px] w-[17px] items-center justify-center border-l border-[#909090]">
            <svg viewBox="0 0 10 6" className="h-[6px] w-[10px]"><path d="M0 0 H10 L5 6Z" fill="#808080" /></svg>
          </div>
        </div>
        <Handle wide="w-[19px]" />
        {toolbarRest.map((n, i) => <ToolItem key={i} name={n} />)}
      </div>

      <div className="flex min-h-0 flex-1">
        <aside className="flex w-6 shrink-0 flex-col gap-[2px] bg-[#6e6e6e]">
          <SideTab label="Format Explorer"><circle cx="8" cy="8" r="7" fill="#d65ad6" stroke="#33202f" strokeWidth="1.200" /></SideTab>
          <div className="flex-1" />
          <SideTab label="File Explorer"><path d="M0.700 3.500 V12.500 Q8 17 15.300 12.500 V3.500" fill="#cdb698" stroke="#2b2520" /><ellipse cx="8" cy="3.500" rx="7.300" ry="2.800" fill="#d9c4a8" stroke="#2b2520" /></SideTab>
          <SideTab label="Script Editor"><path d="M0.700 0.700 H9.500 L15.300 6.500 V15.300 H0.700Z" fill="#06c9a4" stroke="#14332c" /><path d="M9.500 0.700 V6.500 H15.300" fill="none" stroke="#14332c" /></SideTab>
          <SideTab label="History Explorer"><path d="M8 0.700 L15.500 11 L8 15.500 L0.500 11Z M8 0.700 V15.500" fill="#ff8a3c" stroke="#33231a" /></SideTab>
        </aside>
        <main className="relative flex min-w-0 flex-1 items-end">
          <svg viewBox="0 0 1893 915" preserveAspectRatio="xMidYMid slice" className="absolute inset-0 h-full w-full" aria-hidden="true">
            <rect width="1893" height="915" fill="#404040" />
            <path d="M655 237 L910 0 H1661 L1919 237 L1287 821Z" fill="url(#topface)" />
            <path d="M655 237 L1287 821 V915 H820 L655 759Z" fill="url(#leftface)" />
            <path d="M1919 237 L1287 821 V915 H1754 L1919 759Z" fill="url(#rightface)" />
            <path d="M1287.500 821 V915" stroke="#585858" />
          </svg>
          <div className="absolute inset-y-0 left-[1460px] w-px bg-[#c89858]" />
          <div className="relative flex gap-2 pb-4 pl-4">
            <ImageIcon label="nebula" fits />
            <ImageIcon label="Image10" />
          </div>
          <div className="absolute top-8 left-[1496px]"><Stack items={columnA.map(([l, i]) => [l, i])} /></div>
          <div className="absolute top-8 left-[1688px] flex flex-col">
            <Stack items={columnB[0]} />
            <div className="mt-[30px]"><Stack items={columnB[1]} /></div>
            <div className="mt-[14px]"><Stack items={columnB[2]} /></div>
          </div>
          <Dialog />
        </main>
      </div>

      <footer className="relative z-50 flex h-[31px] shrink-0 items-center bg-[#efefef]">
        <Handle wide="w-[18px] pr-1" />
        <div className="relative h-5 w-[275px] border border-[#7f7f7f] bg-linear-to-b from-[#f4f4f4] to-[#cbcbcb]">
          <select aria-label="View" className="block h-full w-full appearance-none bg-transparent pl-[5px] font-['DejaVu_Sans_Mono'] text-xs text-black">
            <option>&lt;No View Selected&gt;</option>
          </select>
          <div className="pointer-events-none absolute top-px right-0 flex h-4 w-[17px] items-center justify-center border-l border-[#909090]">
            <svg viewBox="0 0 10 6" className="h-[6px] w-[10px]"><path d="M0 0 H10 L5 6Z" fill="#111" /></svg>
          </div>
        </div>
        <button aria-label="View list" className="ml-1 flex h-5 w-5 items-center justify-center border border-[#7f7f7f] bg-white">
          <svg viewBox="0 0 12 12" className="size-3"><path d="M3 1 H11 V11 H3Z" fill="#fff" stroke="#4a4a4a" strokeWidth="1.600" /><path d="M0 4 L4 0 V12 H0Z" fill="#4a4a4a" /></svg>
        </button>
        <Handle wide="w-[26px] pl-[3px]" />
        <div className="flex gap-1">
          <button aria-label="Workspace 1" className="flex h-[19px] w-[19px] justify-end border border-[#8a8a8a] bg-[#ffad5c]">
            <svg viewBox="0 0 4 17" className="h-[17px] w-1"><path d="M0 0 H4 V17 H0 V12 H2 V10 H0 V7 H2 V5 H0Z" fill="#0a8a0a" /></svg>
          </button>
          {[2, 3, 4].map((n) => <button key={n} aria-label={"Workspace " + n} className="h-[19px] w-[19px] border border-[#9c9c9c]" />)}
        </div>
        <Handle wide="w-[22px]" />
        <div className="w-[174px]" />
        <Handle wide="w-[18px]" />
        <div className="w-[386px]" />
        <svg viewBox="0 0 20 20" className="size-5" aria-hidden="true"><g fill="none" stroke="#444" strokeWidth="1.600"><path d="M10 2 V18 M2 10 H18" /><rect x="6.700" y="6.700" width="6.600" height="6.600" strokeWidth="1.300" /></g></svg>
        <div className="w-2" />
        <Handle wide="w-[18px]" />
      </footer>
    </div>
  );
}
